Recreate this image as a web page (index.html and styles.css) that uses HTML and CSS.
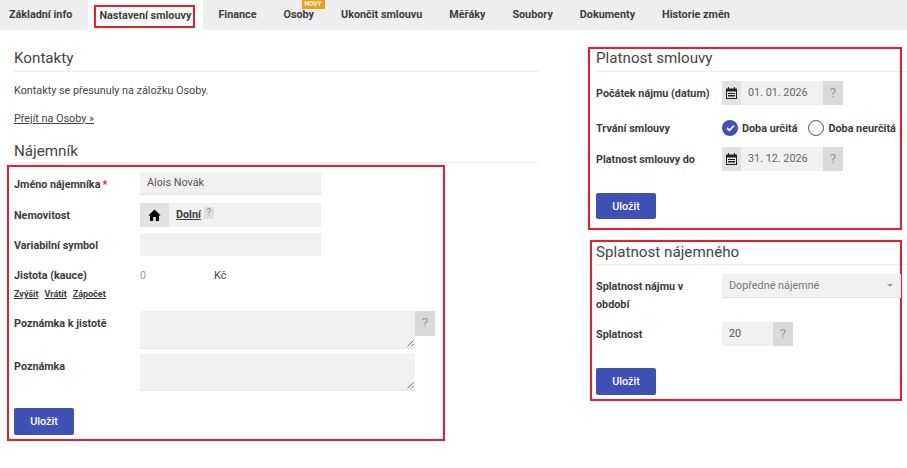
FILE: index.html
```html
<!DOCTYPE html>
<html lang="cs">
<head>
<meta charset="utf-8">
<title>Nastavení smlouvy</title>
<link rel="stylesheet" href="styles.css">
</head>
<body>
<nav class="tabs">
  <a class="tab tab-first">Základní info</a>
  <a class="tab tab-active">Nastavení smlouvy<span class="mark mark-tab"></span></a>
  <a class="tab">Finance</a>
  <a class="tab">Osoby<span class="badge">NOVÝ</span></a>
  <a class="tab">Ukončit smlouvu</a>
  <a class="tab">Měřáky</a>
  <a class="tab">Soubory</a>
  <a class="tab">Dokumenty</a>
  <a class="tab">Historie změn</a>
</nav>
<main class="page">
  <section class="left">
    <h2 class="heading">Kontakty</h2>
    <p class="text">Kontakty se přesunuly na záložku Osoby.</p>
    <p class="text text-link"><a class="link">Přejít na Osoby »</a></p>
    <h2 class="heading heading-second">Nájemník</h2>
    <div class="form">
      <span class="mark mark-form"></span>
      <div class="row row-name">
        <label class="label">Jméno nájemníka<span class="req">*</span></label>
        <div class="input input-wide">Alois Novák</div>
      </div>
      <div class="row row-prop">
        <label class="label">Nemovitost</label>
        <div class="prop">
          <span class="addon addon-home">
            <svg width="13" height="12" viewBox="0 0 13 12"><path d="M6.5 0.5 0.3 6.6H2V12H5.2V8H7.8V12H11V6.6H12.7Z" fill="#000"/></svg>
          </span>
          <a class="prop-link">Dolní</a><span class="mini-help">?</span>
        </div>
      </div>
      <div class="row row-vs">
        <label class="label">Variabilní symbol</label>
        <div class="input input-wide input-vs"></div>
      </div>
      <div class="row row-kauce">
        <label class="label">Jistota (kauce)</label>
        <span class="kauce-val">0</span><span class="kauce-cur">Kč</span>
      </div>
      <div class="actions"><a>Zvýšit</a><a>Vrátit</a><a>Zápočet</a></div>
      <div class="row row-note1">
        <label class="label">Poznámka k jistotě</label>
        <div class="area area-1"><svg class="grip" width="7" height="7" viewBox="0 0 7 7"><path d="M0.5 6.5 6.5 0.5M4 6.5 6.5 4" stroke="#777" fill="none"/></svg></div>
        <span class="help help-area">?</span>
      </div>
      <div class="row row-note2">
        <label class="label">Poznámka</label>
        <div class="area area-2"><svg class="grip" width="7" height="7" viewBox="0 0 7 7"><path d="M0.5 6.5 6.5 0.5M4 6.5 6.5 4" stroke="#777" fill="none"/></svg></div>
      </div>
      <button class="btn btn-left">Uložit</button>
    </div>
  </section>
  <aside class="right">
    <section class="panel panel-1">
      <span class="mark mark-p1"></span>
      <h2 class="heading">Platnost smlouvy</h2>
      <div class="rrow rrow-first">
        <label class="label rlabel">Počátek nájmu (datum)</label>
        <span class="addon addon-cal">
          <svg width="11" height="12" viewBox="0 0 11 12"><path d="M0 1.5H2V0H3V1.5H8V0H9V1.5H11V12H0ZM1 4.5V11H10V4.5Z" fill="#222"/><path d="M2 6H9V7H2ZM2 8H9V9.5H2Z" fill="#222"/></svg>
        </span>
        <span class="date">01. 01. 2026</span>
        <span class="help">?</span>
      </div>
      <div class="rrow rrow-radio">
        <label class="label rlabel">Trvání smlouvy</label>
        <span class="radio radio-on">
          <svg width="9" height="8" viewBox="0 0 9 8"><path d="M1 4 3.5 6.3 8 1.5" stroke="#fff" stroke-width="1.8" fill="none"/></svg>
        </span>
        <span class="radio-text">Doba určitá</span>
        <span class="radio radio-off"></span>
        <span class="radio-text">Doba neurčitá</span>
      </div>
      <div class="rrow rrow-last">
        <label class="label rlabel">Platnost smlouvy do</label>
        <span class="addon addon-cal">
          <svg width="11" height="12" viewBox="0 0 11 12"><path d="M0 1.5H2V0H3V1.5H8V0H9V1.5H11V12H0ZM1 4.5V11H10V4.5Z" fill="#222"/><path d="M2 6H9V7H2ZM2 8H9V9.5H2Z" fill="#222"/></svg>
        </span>
        <span class="date">31. 12. 2026</span>
        <span class="help">?</span>
      </div>
      <button class="btn btn-p1">Uložit</button>
    </section>
    <section class="panel panel-2">
      <span class="mark mark-p2"></span>
      <h2 class="heading heading-p2">Splatnost nájemného</h2>
      <div class="rrow rrow-select">
        <label class="label rlabel rlabel-wrap">Splatnost nájmu v období</label>
        <div class="select">Dopředné nájemné<span class="caret"></span></div>
      </div>
      <div class="rrow rrow-splat">
        <label class="label rlabel">Splatnost</label>
        <span class="num">20</span>
        <span class="help">?</span>
      </div>
      <button class="btn btn-p2">Uložit</button>
    </section>
  </aside>
</main>
</body>
</html>
```
FILE: styles.css
```css
* { box-sizing: border-box; }
html, body { margin: 0; padding: 0; }
body {
  font-family: Roboto, "Liberation Sans", sans-serif;
  font-size: 10.8px;
  color: #3c3c3c;
  background: #fff;
  height: 468px;
  overflow: hidden;
}
.tabs {
  display: flex;
  height: 30px;
  background: #eeeeee;
  gap: 4px;
}
.tab {
  position: relative;
  display: flex;
  align-items: center;
  padding: 0 11.5px;
  font-size: 10.8px;
  font-weight: 700;
  color: #3d3d3d;
  white-space: nowrap;
  height: 29px;
}
.tab-first { padding-left: 9px; }
.tab-active { background: #fff; height: 30px; }
.badge {
  position: absolute;
  left: 29.5px;
  top: 0;
  width: 23px;
  height: 9px;
  background: #f39c12;
  color: #fff;
  font-size: 6.5px;
  font-weight: 700;
  line-height: 9px;
  text-align: center;
}
.mark {
  position: absolute;
  border: 2px solid #ec1c2c;
  pointer-events: none;
}
.mark-tab { left: 6px; top: 5px; width: 101px; height: 23px; }
.mark-form { left: -7px; top: 2px; width: 438px; height: 276px; }
.mark-p1 { left: -8px; top: 0; width: 314px; height: 183px; }
.mark-p2 { left: -6px; top: 0; width: 312px; height: 161px; }

.page { display: flex; }
.left { width: 525px; margin-left: 14px; flex: none; }
.right { margin-left: 57px; flex: 1; min-width: 0; }
.heading {
  margin: 0;
  font-size: 15.2px;
  font-weight: 400;
  line-height: 19px;
  color: #444;
  padding-bottom: 3px;
  border-bottom: 1px solid #eee;
}
.left > .heading:first-child { margin-top: 19px; }
.heading-second { margin-top: 16px; padding-bottom: 1px; }
.heading-p2 { padding-bottom: 2px; }
.text { margin: 12px 0 0; line-height: 14px; color: #444; height: 14px; }
.text-link { margin-top: 14px; }
.link { text-decoration: underline; }

.form { position: relative; height: 280px; }
.row { display: flex; align-items: flex-start; }
.label {
  display: block;
  width: 126px;
  flex: none;
  font-weight: 700;
  color: #3c3c3c;
  line-height: 14px;
}
.req { color: #ec1c2c; margin-left: 2px; }
.input {
  background: #f1f1f1;
  border-bottom: 1px solid #e2e2e2;
  color: #555;
  padding: 4px 7px 0;
  line-height: 14px;
}
.input-wide { width: 181px; height: 23px; }
.input-vs { border-bottom: 0; }
.row-name { padding-top: 9px; }
.row-name .label { padding-top: 6px; }
.row-prop { margin-top: 8px; }
.row-prop .label { padding-top: 6px; }
.row-vs { margin-top: 6px; }
.row-vs .label { padding-top: 6px; }
.prop {
  display: flex;
  align-items: flex-start;
  width: 181px;
  height: 24px;
  background: #f1f1f1;
}
.addon {
  display: flex;
  align-items: center;
  justify-content: center;
  flex: none;
  background: #e2e2e2;
  height: 24px;
}
.addon-home { width: 29px; }
.prop-link {
  margin: 5px 0 0 7px;
  font-weight: 700;
  text-decoration: underline;
  line-height: 14px;
}
.mini-help {
  margin: 4px 0 0 3px;
  width: 10px;
  height: 12px;
  background: #dedede;
  color: #999;
  font-size: 10px;
  line-height: 12px;
  text-align: center;
}
.row-kauce { margin-top: 13px; height: 14px; }
.kauce-val { color: #999; line-height: 14px; width: 74px; }
.kauce-cur { color: #444; line-height: 14px; }
.actions {
  display: flex;
  gap: 6px;
  margin-top: 5px;
  font-size: 9px;
  font-weight: 700;
  line-height: 12px;
  height: 12px;
}
.actions a { text-decoration: underline; }
.area {
  position: relative;
  width: 275px;
  background: #f1f1f1;
  border-bottom: 1px solid #e8e8e8;
}
.area-1 { height: 38px; }
.area-2 { height: 37px; }
.grip { position: absolute; right: 1px; bottom: 1px; }
.row-note1 { margin-top: 11px; }
.row-note1 .label { padding-top: 6px; }
.row-note2 { margin-top: 5px; }
.row-note2 .label { padding-top: 6px; }
.help {
  flex: none;
  width: 20px;
  height: 24px;
  background: #d9d9d9;
  color: #999;
  font-size: 13px;
  line-height: 24px;
  text-align: center;
}
.help-area { height: 25px; }
.btn {
  display: block;
  border: 0;
  border-radius: 2px;
  width: 60px;
  height: 27px;
  background: #3f51b5;
  color: #fff;
  font: 500 10.8px Roboto, "Liberation Sans", sans-serif;
  padding: 0;
}
.btn-left { margin-top: 17px; }

.panel { position: relative; }
.panel-1 { margin-top: 17px; height: 193px; padding-top: 2px; }
.panel-2 { height: 161px; padding-top: 3px; }
.rrow { display: flex; align-items: center; }
.rlabel { width: 126px; padding-top: 1px; }
.rrow-first { margin-top: 9px; height: 24px; }
.addon-cal { width: 19px; }
.date {
  width: 82px;
  height: 24px;
  background: #f1f1f1;
  color: #666;
  padding-left: 7px;
  line-height: 24px;
}
.rrow-radio { margin-top: 14px; height: 18px; }
.rrow-last { margin-top: 10px; height: 24px; }
.radio {
  flex: none;
  display: flex;
  align-items: center;
  justify-content: center;
  width: 16px;
  height: 16px;
  border-radius: 50%;
}
.radio-on { background: #3f51b5; }
.radio-off { border: 1.5px solid #3f51b5; margin-left: 11px; }
.radio-text { font-weight: 700; margin-left: 4px; padding-top: 1px; white-space: nowrap; color: #3c3c3c; }
.btn-p1 { margin-top: 22px; height: 26px; }
.rrow-select { margin-top: 9px; align-items: flex-start; }
.rlabel-wrap { line-height: 17.5px; padding: 4px 20px 0 0; }
.select {
  position: relative;
  width: 179px;
  height: 24px;
  background: #f1f1f1;
  border-bottom: 1px solid #e2e2e2;
  color: #777;
  padding-left: 7px;
  line-height: 23px;
}
.caret {
  position: absolute;
  right: 8px;
  top: 10px;
  border: 3px solid transparent;
  border-top: 3px solid #999;
  border-bottom: 0;
}
.rrow-splat { margin-top: 9px; height: 24px; }
.num {
  width: 51px;
  height: 24px;
  background: #f1f1f1;
  color: #555;
  padding-left: 7px;
  line-height: 24px;
}
.btn-p2 { margin-top: 22px; height: 27px; }
```
